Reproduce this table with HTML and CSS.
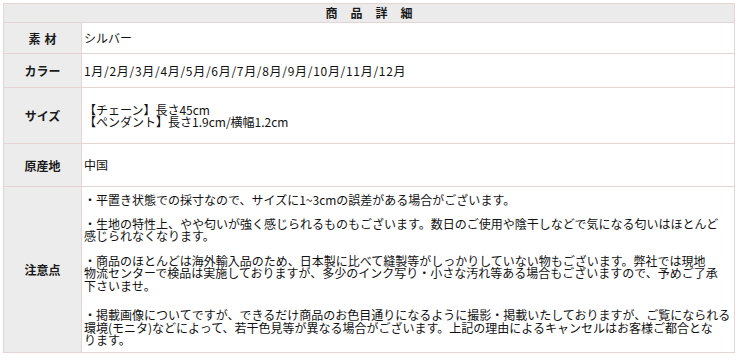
FILE: index.html
```html
<!DOCTYPE html>
<html lang="ja">
<head>
<meta charset="utf-8">
<title>商品詳細</title>
<link rel="stylesheet" href="styles.css">
</head>
<body>
<div class="page">
  <div class="spec">
    <div class="head">商品詳細</div>
    <div class="label h1"><span class="spaced">素材</span></div>
    <div class="value h1">シルバー</div>
    <div class="label h2">カラー</div>
    <div class="value h2 months">1月/2月/3月/4月/5月/6月/7月/8月/9月/10月/11月/12月</div>
    <div class="label h3">サイズ</div>
    <div class="value h3"><span class="ln">【チェーン】長さ45cm</span><span class="ln">【ペンダント】長さ1.9cm/横幅1.2cm</span></div>
    <div class="label h4">原産地</div>
    <div class="value h4">中国</div>
    <div class="label h5">注意点</div>
    <div class="value h5 notes">
      <p class="p1"><span class="ln">・平置き状態での採寸なので、サイズに1~3cmの誤差がある場合がございます。</span></p>
      <p class="p2"><span class="ln">・生地の特性上、やや匂いが強く感じられるものもございます。数日のご使用や陰干しなどで気になる匂いはほとんど</span><span class="ln">感じられなくなります。</span></p>
      <p class="p3"><span class="ln">・商品のほとんどは海外輸入品のため、日本製に比べて縫製等がしっかりしていない物もございます。弊社では現地</span><span class="ln">物流センターで検品は実施しておりますが、多少のインク写り・小さな汚れ等ある場合もございますので、予めご了承</span><span class="ln">下さいませ。</span></p>
      <p class="p4"><span class="ln">・掲載画像についてですが、できるだけ商品のお色目通りになるように撮影・掲載いたしておりますが、ご覧になられる</span><span class="ln">環境(モニタ)などによって、若干色見等が異なる場合がございます。上記の理由によるキャンセルはお客様ご都合とな</span><span class="ln">ります。</span></p>
    </div>
  </div>
</div>
</body>
</html>
```
FILE: styles.css
```css
html, body {
  margin: 0;
  padding: 0;
  background: #ffffff;
}
.page {
  padding: 3px 3px 0 3px;
  font-family: "Noto Sans CJK JP", "Noto Sans", sans-serif;
  font-size: 12px;
  color: #111111;
}
.spec {
  display: grid;
  grid-template-columns: 78px 1fr;
  width: 731px;
  border-top: 1px solid #e6d4d4;
  border-left: 1px solid #e6d4d4;
}
.spec > div {
  border-right: 1px solid #e6d4d4;
  border-bottom: 1px solid #e6d4d4;
  box-sizing: border-box;
}
.head {
  grid-column: 1 / 3;
  background: #ebebeb;
  text-align: center;
  font-weight: bold;
  height: 19px;
  line-height: 18px;
  color: #1a1a1a;
  letter-spacing: 13px;
  padding-left: 13px;
}
.label {
  background: #ececec;
  font-weight: bold;
  color: #1a1a1a;
  display: flex;
  align-items: center;
  justify-content: center;
}
.spaced {
  letter-spacing: 4px;
  padding-left: 4px;
}
.value {
  background: #ffffff;
  display: flex;
  flex-direction: column;
  justify-content: center;
  padding: 0 2px 0 2px;
  line-height: 12px;
  white-space: nowrap;
}
.months {
  letter-spacing: 0.7px;
}
.ln {
  display: block;
  height: 12px;
  line-height: 12px;
  overflow: visible;
}
.h1 { height: 31px; }
.h2 { height: 34px; }
.h3 { height: 56px; }
.h4 { height: 43px; }
.h5 { height: 166px; }
.notes {
  justify-content: flex-start;
  padding-top: 7px;
}
.notes p {
  margin: 0;
}
.notes .ln {
  height: 12.5px;
  line-height: 12.5px;
}
.notes .p1 { margin-bottom: 11px; }
.notes .p2 { margin-bottom: 12px; }
.notes .p3 { margin-bottom: 17px; }
```
